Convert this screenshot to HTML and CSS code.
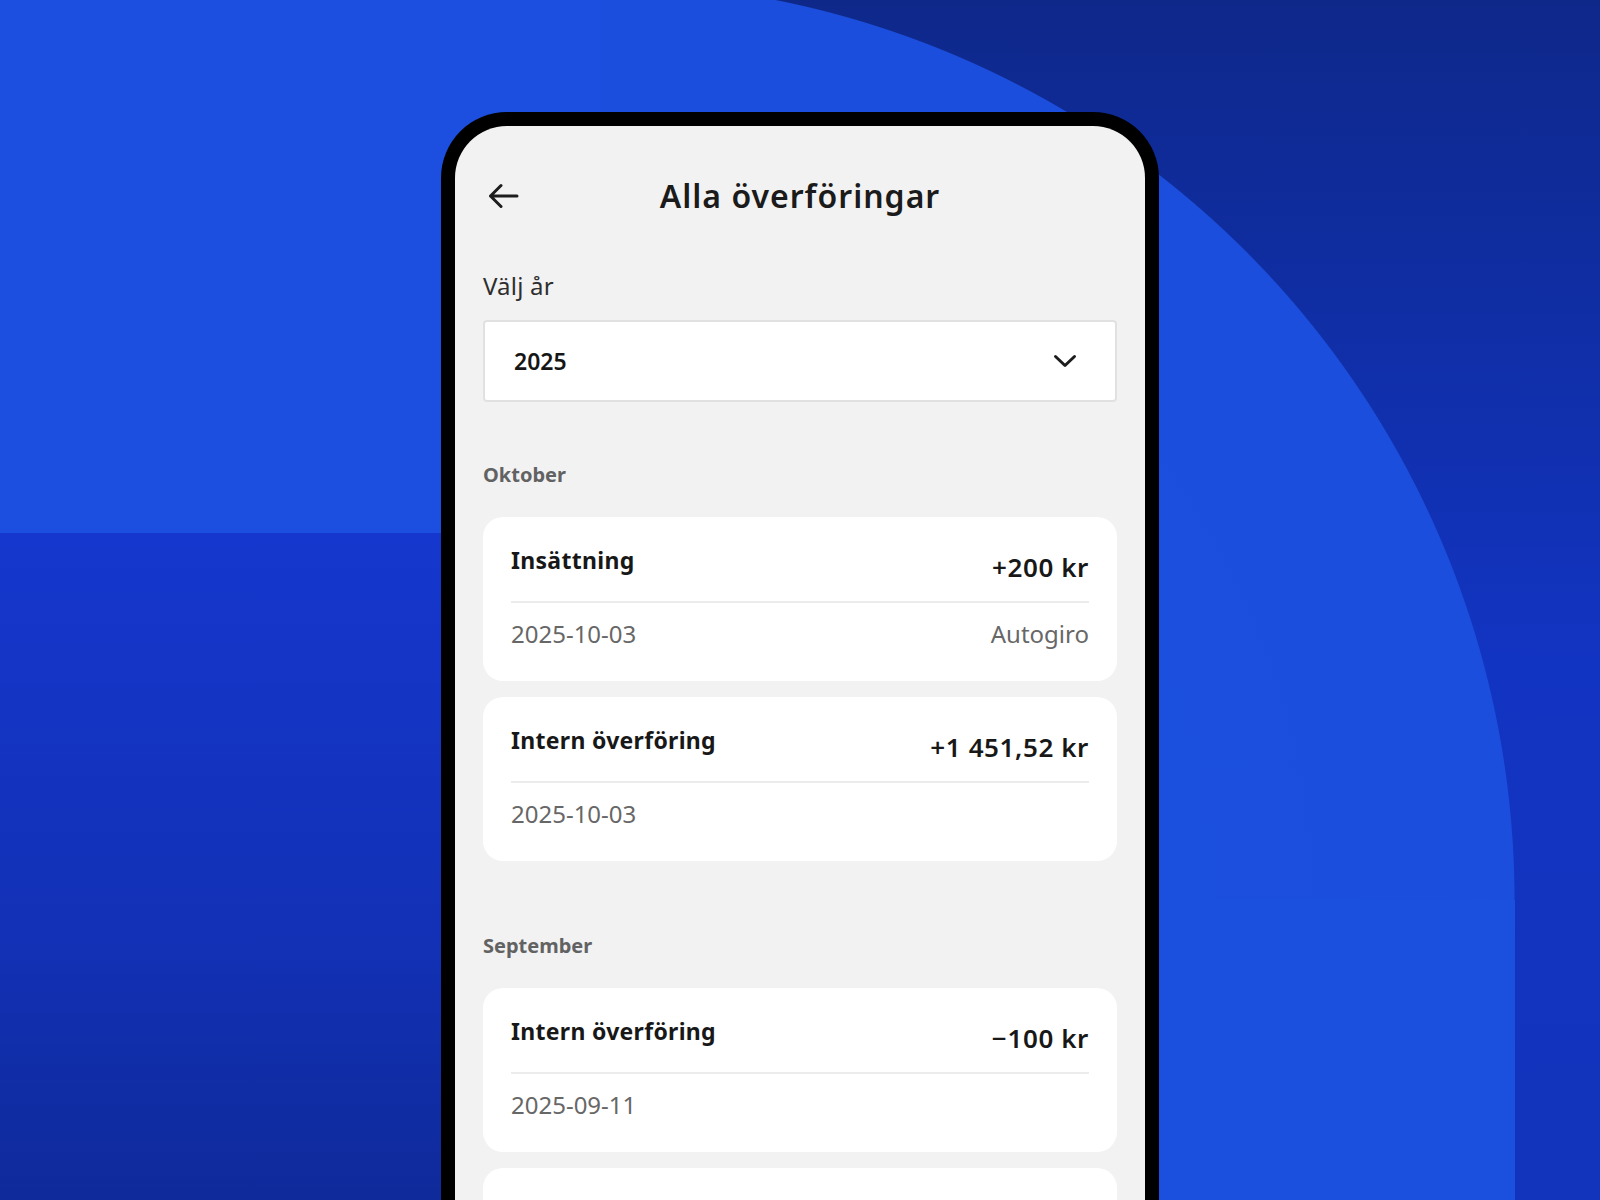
FILE: index.html
```html
<!DOCTYPE html>
<html lang="sv">
<head>
<meta charset="utf-8">
<title>Alla överföringar</title>
<link rel="stylesheet" href="styles.css">
</head>
<body>
<div class="stage">
  <div class="phone">
    <div class="screen">
      <header class="topbar">
        <button class="back" aria-label="Tillbaka">
          <svg width="32" height="26" viewBox="0 0 32 26" fill="none" stroke="#1d1d1d" stroke-width="3" stroke-linecap="round" stroke-linejoin="round"><path d="M30 13H3.5M14 2.5L3.5 13L14 23.5"/></svg>
        </button>
        <h1 class="title">Alla överföringar</h1>
        <span class="spacer"></span>
      </header>

      <div class="field-label">Välj år</div>
      <div class="select">
        <span class="select-value">2025</span>
        <svg class="chev" width="24" height="14" viewBox="0 0 24 14" fill="none" stroke="#1d1d1d" stroke-width="3" stroke-linecap="round" stroke-linejoin="round"><path d="M2.5 2.5L12 11.5L21.5 2.5"/></svg>
      </div>

      <section class="month month-first">
        <h2 class="month-title">Oktober</h2>
        <div class="card">
          <div class="row-top">
            <span class="tx-title">Insättning</span>
            <span class="tx-amount">+200 kr</span>
          </div>
          <div class="divider"></div>
          <div class="row-bottom">
            <span class="tx-date">2025-10-03</span>
            <span class="tx-meta">Autogiro</span>
          </div>
        </div>
        <div class="card">
          <div class="row-top">
            <span class="tx-title">Intern överföring</span>
            <span class="tx-amount">+1 451,52 kr</span>
          </div>
          <div class="divider"></div>
          <div class="row-bottom">
            <span class="tx-date">2025-10-03</span>
          </div>
        </div>
      </section>

      <section class="month">
        <h2 class="month-title">September</h2>
        <div class="card">
          <div class="row-top">
            <span class="tx-title">Intern överföring</span>
            <span class="tx-amount">−100 kr</span>
          </div>
          <div class="divider"></div>
          <div class="row-bottom">
            <span class="tx-date">2025-09-11</span>
          </div>
        </div>
        <div class="card">
          <div class="row-top">
            <span class="tx-title">Insättning</span>
            <span class="tx-amount">+200 kr</span>
          </div>
          <div class="divider"></div>
          <div class="row-bottom">
            <span class="tx-date">2025-09-03</span>
            <span class="tx-meta">Autogiro</span>
          </div>
        </div>
      </section>
    </div>
  </div>
</div>
</body>
</html>
```

FILE: styles.css
```css
html, body {
  margin: 0;
  padding: 0;
}

body {
  font-family: "Noto Sans", "DejaVu Sans", sans-serif;
  color: #1a1a1a;
}

.stage {
  width: 1600px;
  height: 1200px;
  overflow: hidden;
  box-sizing: border-box;
  padding-top: 112px;
  display: flex;
  justify-content: center;
  align-items: flex-start;
  background:
    linear-gradient(180deg, #1537cd 0%, #1231b6 60%, #0f2a9a 100%) 0 533px / 600px 667px no-repeat,
    linear-gradient(#1c4fdf, #1c4fdf) 0 0 / 600px 533px no-repeat,
    linear-gradient(#1b4fde, #1b4fde) -321px 900px / 1836px 300px no-repeat,
    radial-gradient(circle at 597px 900px, #1b50df 0, #1b4edc 917px, rgba(27,78,220,0) 918px) 0 0 / 100% 100% no-repeat,
    linear-gradient(180deg, #0e288a 0%, #1234c2 55%, #1233bb 100%);
}

.phone {
  width: 718px;
  height: 1120px;
  flex: none;
  box-sizing: border-box;
  border: 14px solid #000;
  border-bottom: none;
  border-radius: 66px 66px 0 0;
  background: #f2f2f2;
  overflow: hidden;
}

.screen {
  padding: 50px 28px 0;
}

/* header */
.topbar {
  display: grid;
  grid-template-columns: 1fr auto 1fr;
  align-items: center;
  height: 40px;
}

.back {
  justify-self: start;
  margin-left: 4px;
  padding: 0;
  border: 0;
  background: none;
  display: flex;
  width: 32px;
  height: 26px;
}

.title {
  margin: 0;
  font-size: 32px;
  line-height: 40px;
  font-weight: 600;
  letter-spacing: 1px;
  color: #1b1b1b;
}

/* year select */
.field-label {
  margin-top: 55px;
  font-size: 24px;
  line-height: 30px;
  color: #2e2e2e;
  letter-spacing: 0.2px;
}

.select {
  margin-top: 19px;
  height: 82px;
  box-sizing: border-box;
  border: 2px solid #e1e1e1;
  border-radius: 4px;
  background: #fff;
  display: flex;
  align-items: center;
  justify-content: space-between;
  padding: 0 38px 0 29px;
}

.select-value {
  font-size: 23px;
  line-height: 30px;
  font-weight: 600;
  color: #161616;
}

.chev {
  display: block;
}

/* months */
.month {
  margin-top: 73px;
}

.month-first {
  margin-top: 61px;
}

.month-title {
  margin: 0 0 30px;
  font-size: 20px;
  line-height: 24px;
  font-weight: 700;
  color: #626262;
}

.card {
  background: #fff;
  border-radius: 20px;
  padding: 28px 28px 32px;
  margin-bottom: 16px;
}

.row-top {
  display: flex;
  justify-content: space-between;
  align-items: flex-start;
  height: 37px;
}

.tx-title {
  font-size: 23px;
  line-height: 30px;
  font-weight: 700;
  letter-spacing: 0.3px;
  color: #181818;
}

.tx-amount {
  margin-top: 7px;
  font-size: 26px;
  line-height: 30px;
  font-weight: 600;
  letter-spacing: 0.6px;
  color: #181818;
}

.divider {
  margin-top: 19px;
  height: 2px;
  background: #ececec;
}

.row-bottom {
  margin-top: 16px;
  display: flex;
  justify-content: space-between;
  font-size: 24px;
  line-height: 30px;
  color: #676767;
}
```
